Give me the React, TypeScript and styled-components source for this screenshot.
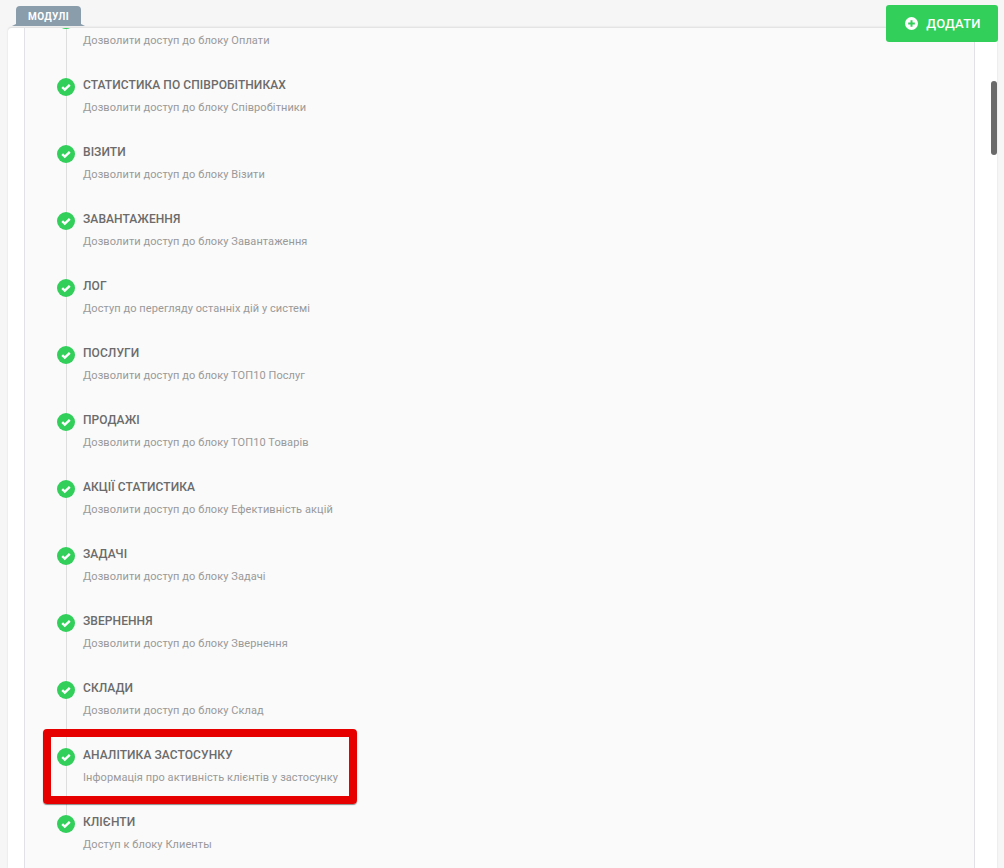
import styled, { createGlobalStyle } from "styled-components";

const GlobalStyle = createGlobalStyle`
  html, body {
    margin: 0;
    height: 100%;
    overflow: hidden;
    background: #f6f6f6;
    font-family: Roboto, "Noto Sans", sans-serif;
  }
`;

const Page = styled.div`
  position: relative;
  height: 868px;
  padding: 27px 7px 0 8px;
  box-sizing: border-box;
`;

const TabLabel = styled.div`
  position: absolute;
  top: 6px;
  left: 16px;
  width: 65px;
  height: 20px;
  border-radius: 4px 4px 0 0;
  background: #8a9dab;
  color: #fff;
  font-size: 10px;
  font-weight: 700;
  letter-spacing: 0.3px;
  line-height: 22px;
  text-align: center;
  z-index: 2;

  &::before,
  &::after {
    content: "";
    position: absolute;
    bottom: 0;
    border-bottom: 2px solid #8a9dab;
  }
  &::before {
    left: -4px;
    border-left: 4px solid transparent;
  }
  &::after {
    right: -4px;
    border-right: 4px solid transparent;
  }
`;

const AddButton = styled.button`
  position: absolute;
  top: 5px;
  right: 6px;
  width: 112px;
  height: 37px;
  display: flex;
  align-items: center;
  justify-content: center;
  gap: 8px;
  padding: 0 0 0 2px;
  border: 0;
  border-radius: 3px;
  background: #32cf5b;
  color: #fff;
  font-family: inherit;
  font-size: 13px;
  font-weight: 500;
  letter-spacing: 0.2px;
  z-index: 2;
`;

const Card = styled.div`
  height: 100%;
  box-sizing: border-box;
  padding: 0 22px 0 16px;
  border-top: 1px solid #e4e4e4;
  border-radius: 4px 4px 0 0;
  background: #fff;
  box-shadow: 0 0 2px rgba(0, 0, 0, 0.12);
  overflow: hidden;
`;

const Panel = styled.div`
  height: 100%;
  display: flow-root;
  border: solid #e1e1e6;
  border-width: 0 1px;
  background: #fafafa;
`;

const Timeline = styled.ul`
  position: relative;
  margin: -24px 0 0 32px;
  padding: 0;
  list-style: none;

  &::before {
    content: "";
    position: absolute;
    top: 0;
    bottom: 60px;
    left: 9px;
    width: 1px;
    background: #dedede;
  }
`;

const Row = styled.li`
  position: relative;
  height: 67px;
  display: flex;
  gap: 8px;
`;

const Marker = styled.span`
  position: relative;
  width: 18px;
  height: 18px;
  margin-top: 7px;
  flex: none;
  z-index: 1;
`;

const Texts = styled.div`
  display: flex;
  flex-direction: column;
`;

const Title = styled.div`
  height: 14px;
  margin-top: 7px;
  color: #6b6b6b;
  font-size: 12px;
  font-weight: 500;
  letter-spacing: 0.07px;
  line-height: 14px;
  text-transform: uppercase;
`;

const Description = styled.div`
  margin-top: 9px;
  color: #999;
  font-size: 11px;
  letter-spacing: 0.08px;
  line-height: 13px;
`;

const Highlight = styled.div`
  position: absolute;
  top: -12px;
  left: -14px;
  width: 314px;
  height: 75px;
  box-sizing: border-box;
  border: 8px solid #e60000;
  border-radius: 4px;
  box-shadow: 0 1px 1px rgba(0, 0, 0, 0.45);
  z-index: 2;
`;

const Scrollbar = styled.div`
  position: absolute;
  top: 81px;
  right: 7px;
  width: 6px;
  height: 74px;
  border-radius: 3px;
  background: #6a6a6a;
  z-index: 2;
`;

const CheckIcon = () => (
  <svg width="18" height="18" viewBox="0 0 18 18">
    <circle cx="9" cy="9" r="9" fill="#32cf5b" />
    <path d="M5.2 9.2 L7.8 11.7 L12.8 6.8" fill="none" stroke="#fff" strokeWidth="2.4" />
  </svg>
);

const PlusIcon = () => (
  <svg width="13" height="13" viewBox="0 0 13 13">
    <circle cx="6.5" cy="6.5" r="6.5" fill="#fff" />
    <path d="M6.5 3.2 V9.8 M3.2 6.5 H9.8" stroke="#32cf5b" strokeWidth="2" />
  </svg>
);

const modules = [
  { title: "", text: "Дозволити доступ до блоку Оплати" },
  { title: "Статистика по співробітниках", text: "Дозволити доступ до блоку Співробітники" },
  { title: "Візити", text: "Дозволити доступ до блоку Візити" },
  { title: "Завантаження", text: "Дозволити доступ до блоку Завантаження" },
  { title: "Лог", text: "Доступ до перегляду останніх дій у системі" },
  { title: "Послуги", text: "Дозволити доступ до блоку ТОП10 Послуг" },
  { title: "Продажі", text: "Дозволити доступ до блоку ТОП10 Товарів" },
  { title: "Акції статистика", text: "Дозволити доступ до блоку Ефективність акцій" },
  { title: "Задачі", text: "Дозволити доступ до блоку Задачі" },
  { title: "Звернення", text: "Дозволити доступ до блоку Звернення" },
  { title: "Склади", text: "Дозволити доступ до блоку Склад" },
  { title: "Аналітика застосунку", text: "Інформація про активність клієнтів у застосунку", marked: true },
  { title: "Клієнти", text: "Доступ к блоку Клиенты" },
];

const App = () => {
  return (
    <Page>
      <GlobalStyle />
      <TabLabel>МОДУЛІ</TabLabel>
      <AddButton>
        <PlusIcon />
        ДОДАТИ
      </AddButton>
      <Card>
        <Panel>
          <Timeline>
            {modules.map((item) => (
              <Row key={item.text}>
                <Marker>
                  <CheckIcon />
                </Marker>
                <Texts>
                  <Title>{item.title}</Title>
                  <Description>{item.text}</Description>
                </Texts>
                {item.marked && <Highlight />}
              </Row>
            ))}
          </Timeline>
        </Panel>
      </Card>
      <Scrollbar />
    </Page>
  );
};

export default App;
